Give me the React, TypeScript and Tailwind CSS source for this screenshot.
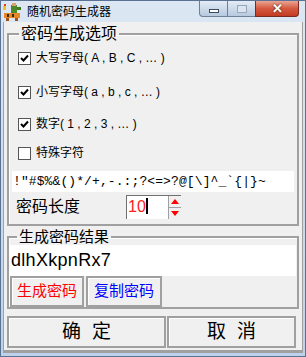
import React from "react";

const ui = "font-['Liberation_Sans','Noto_Sans_CJK_SC',sans-serif]";

function Check({ on }: { on: boolean }) {
  return (
    <span className="w-[13px] h-[13px] bg-white border border-[#555] flex items-center justify-center shrink-0">
      {on && (
        <svg width="9" height="9" viewBox="0 0 9 9">
          <path d="M1 4 L3.5 6.5 L8 1.5" stroke="#000" strokeWidth="2" fill="none" />
        </svg>
      )}
    </span>
  );
}

function TitleIcon() {
  return (
    <svg width="20" height="18" viewBox="0 0 20 18">
      <rect x="1" y="10" width="16" height="5" fill="#e8862a" />
      <rect x="3" y="15" width="3" height="3" fill="#a0521a" />
      <rect x="12" y="15" width="3" height="3" fill="#a0521a" />
      <rect x="4" y="11" width="2" height="3" fill="#3a2a10" />
      <rect x="9" y="11" width="2" height="3" fill="#3a2a10" />
      <rect x="8" y="2" width="6" height="8" fill="#4a8a2a" />
      <rect x="9" y="0" width="4" height="3" fill="#d9a070" />
      <rect x="14" y="4" width="4" height="3" fill="#3d7a20" />
      <rect x="0" y="3" width="3" height="4" fill="#f0c020" />
      <rect x="1" y="1" width="2" height="2" fill="#e04020" />
    </svg>
  );
}

function CapButtons() {
  return (
    <div className="absolute top-0 right-[6px] flex h-[16px]">
      <div className="w-[29px] h-full border border-[#6f7f95] border-t-0 rounded-bl-[4px] bg-gradient-to-b from-[#e4ecf6] to-[#b7c9df] flex items-center justify-center">
        <span className="w-[10px] h-[4px] bg-white border border-[#3c4a5e] mt-[4px]" />
      </div>
      <div className="w-[27px] h-full border-b border-[#6f7f95] bg-gradient-to-b from-[#e4ecf6] to-[#b7c9df] flex items-center justify-center">
        <span className="w-[10px] h-[8px] border border-[#9aa8ba] bg-[#dbe4ef]" />
      </div>
      <div className="w-[44px] h-full border border-[#7a2a20] border-t-0 rounded-br-[4px] bg-gradient-to-b from-[#e9a493] via-[#d4583f] to-[#c33a22] flex items-center justify-center">
        <span className="text-white font-bold text-[13px] leading-[13px] [text-shadow:0_0_2px_#3a1a10]">✕</span>
      </div>
    </div>
  );
}

export default function App() {
  const rows = [
    { on: true, label: "大写字母", tail: "( A , B , C , … )", h: "h-[30px]", mt: "mt-[1px]" },
    { on: true, label: "小写字母", tail: "( a , b , c , … )", h: "h-[30px]", mt: "mt-[4px]" },
    { on: true, label: "数字", tail: "( 1 , 2 , 3 , … )", h: "h-[30px]", mt: "mt-[2px]" },
    { on: false, label: "特殊字符", tail: "", h: "h-[28px]", mt: "mt-0" },
  ];

  return (
    <div className={`w-[306px] h-[357px] bg-gradient-to-b from-[#dce7f3] to-[#bcd2ea] border border-[#5a7394] flex flex-col overflow-hidden text-black ${ui}`}>
      <div className="h-[21px] relative flex items-center shrink-0">
        <div className="ml-[2px] mt-[1px]">
          <TitleIcon />
        </div>
        <span className="ml-[4px] text-[12px] leading-[12px] mt-[1px]">随机密码生成器</span>
        <CapButtons />
      </div>

      <div className="mx-[2px] flex-1 mb-[3px] bg-[#f0f0f0] border-l border-r border-[#a0a0a0] flex flex-col">
        <fieldset className="ml-[3px] mr-[3px] mt-[4px] border-2 border-[#a0a0a0] shadow-[inset_1px_1px_0_#fff] px-[3px] pb-[2px]">
          <legend className="ml-[7px] px-[2px] text-[16px] leading-[16px]">密码生成选项</legend>
          {rows.map((r) => (
            <div key={r.label} className={`flex items-center pl-[6px] ${r.h} ${r.mt}`}>
              <Check on={r.on} />
              <span className="ml-[5px] text-[12px] leading-[14px] whitespace-pre">
                {r.label}
                {r.tail}
              </span>
            </div>
          ))}
          <div className="mt-[4px] h-[21px] bg-white flex items-center pl-[1px] font-['Liberation_Mono',monospace] text-[13px] tracking-[0.1px]">
            {'!"#$%&()*/+,-.:;?<=>?@[\\]^_`{|}~'}
          </div>
          <div className="h-[30px] flex items-center">
            <span className="ml-[4px] text-[16px] leading-[16px] w-[110px]">密码长度</span>
            <div className="h-[24px] w-[55px] bg-white border-t border-l border-[#707070] flex">
              <span className="flex-1 text-[16px] leading-[22px] text-[#ff2020] pl-[1px]">
                10<span className="inline-block w-[2px] h-[16px] bg-black align-[-2px]" />
              </span>
              <div className="w-[13px] flex flex-col border-l border-[#a0a0a0]">
                <div className="flex-1 bg-[#f0f0f0] border-b border-[#a0a0a0] flex items-center justify-center">
                  <span className="w-0 h-0 border-l-[4px] border-r-[4px] border-b-[5px] border-l-transparent border-r-transparent border-b-[#ff0000]" />
                </div>
                <div className="flex-1 bg-[#f0f0f0] flex items-center justify-center">
                  <span className="w-0 h-0 border-l-[4px] border-r-[4px] border-t-[5px] border-l-transparent border-r-transparent border-t-[#ff0000]" />
                </div>
              </div>
            </div>
          </div>
        </fieldset>

        <fieldset className="ml-[3px] mr-[3px] mt-[3px] border-2 border-[#a0a0a0] shadow-[inset_1px_1px_0_#fff] px-[1px]">
          <legend className="ml-[7px] px-[2px] text-[15px] leading-[16px]">生成密码结果</legend>
          <div className="h-[31px] bg-white flex items-center pl-[1px] text-[18px] tracking-[0.3px]">dlhXkpnRx7</div>
          <div className="h-[31px] flex">
            <button className="w-[74px] h-full border-2 border-[#a0a0a0] shadow-[inset_1px_1px_0_#fff] bg-[#f0f0f0] text-[15px] text-[#ff0000]">
              生成密码
            </button>
            <button className="ml-[2px] w-[76px] h-full border-2 border-[#a0a0a0] shadow-[inset_1px_1px_0_#fff] bg-[#f0f0f0] text-[15px] text-[#0000ff]">
              复制密码
            </button>
          </div>
        </fieldset>

        <div className="flex-1 flex items-start pt-[7px] px-[3px] border-b-[3px] border-[#a0a0a0]">
          <button className="w-[159px] h-[32px] border-2 border-[#a0a0a0] shadow-[inset_1px_1px_0_#fff] bg-[#f0f0f0] text-[19px] tracking-[11px] pl-[11px]">
            确定
          </button>
          <button className="ml-[1px] w-[129px] h-[32px] border-2 border-[#a0a0a0] shadow-[inset_1px_1px_0_#fff] bg-[#f0f0f0] text-[19px] tracking-[11px] pl-[11px]">
            取消
          </button>
        </div>
      </div>
    </div>
  );
}
